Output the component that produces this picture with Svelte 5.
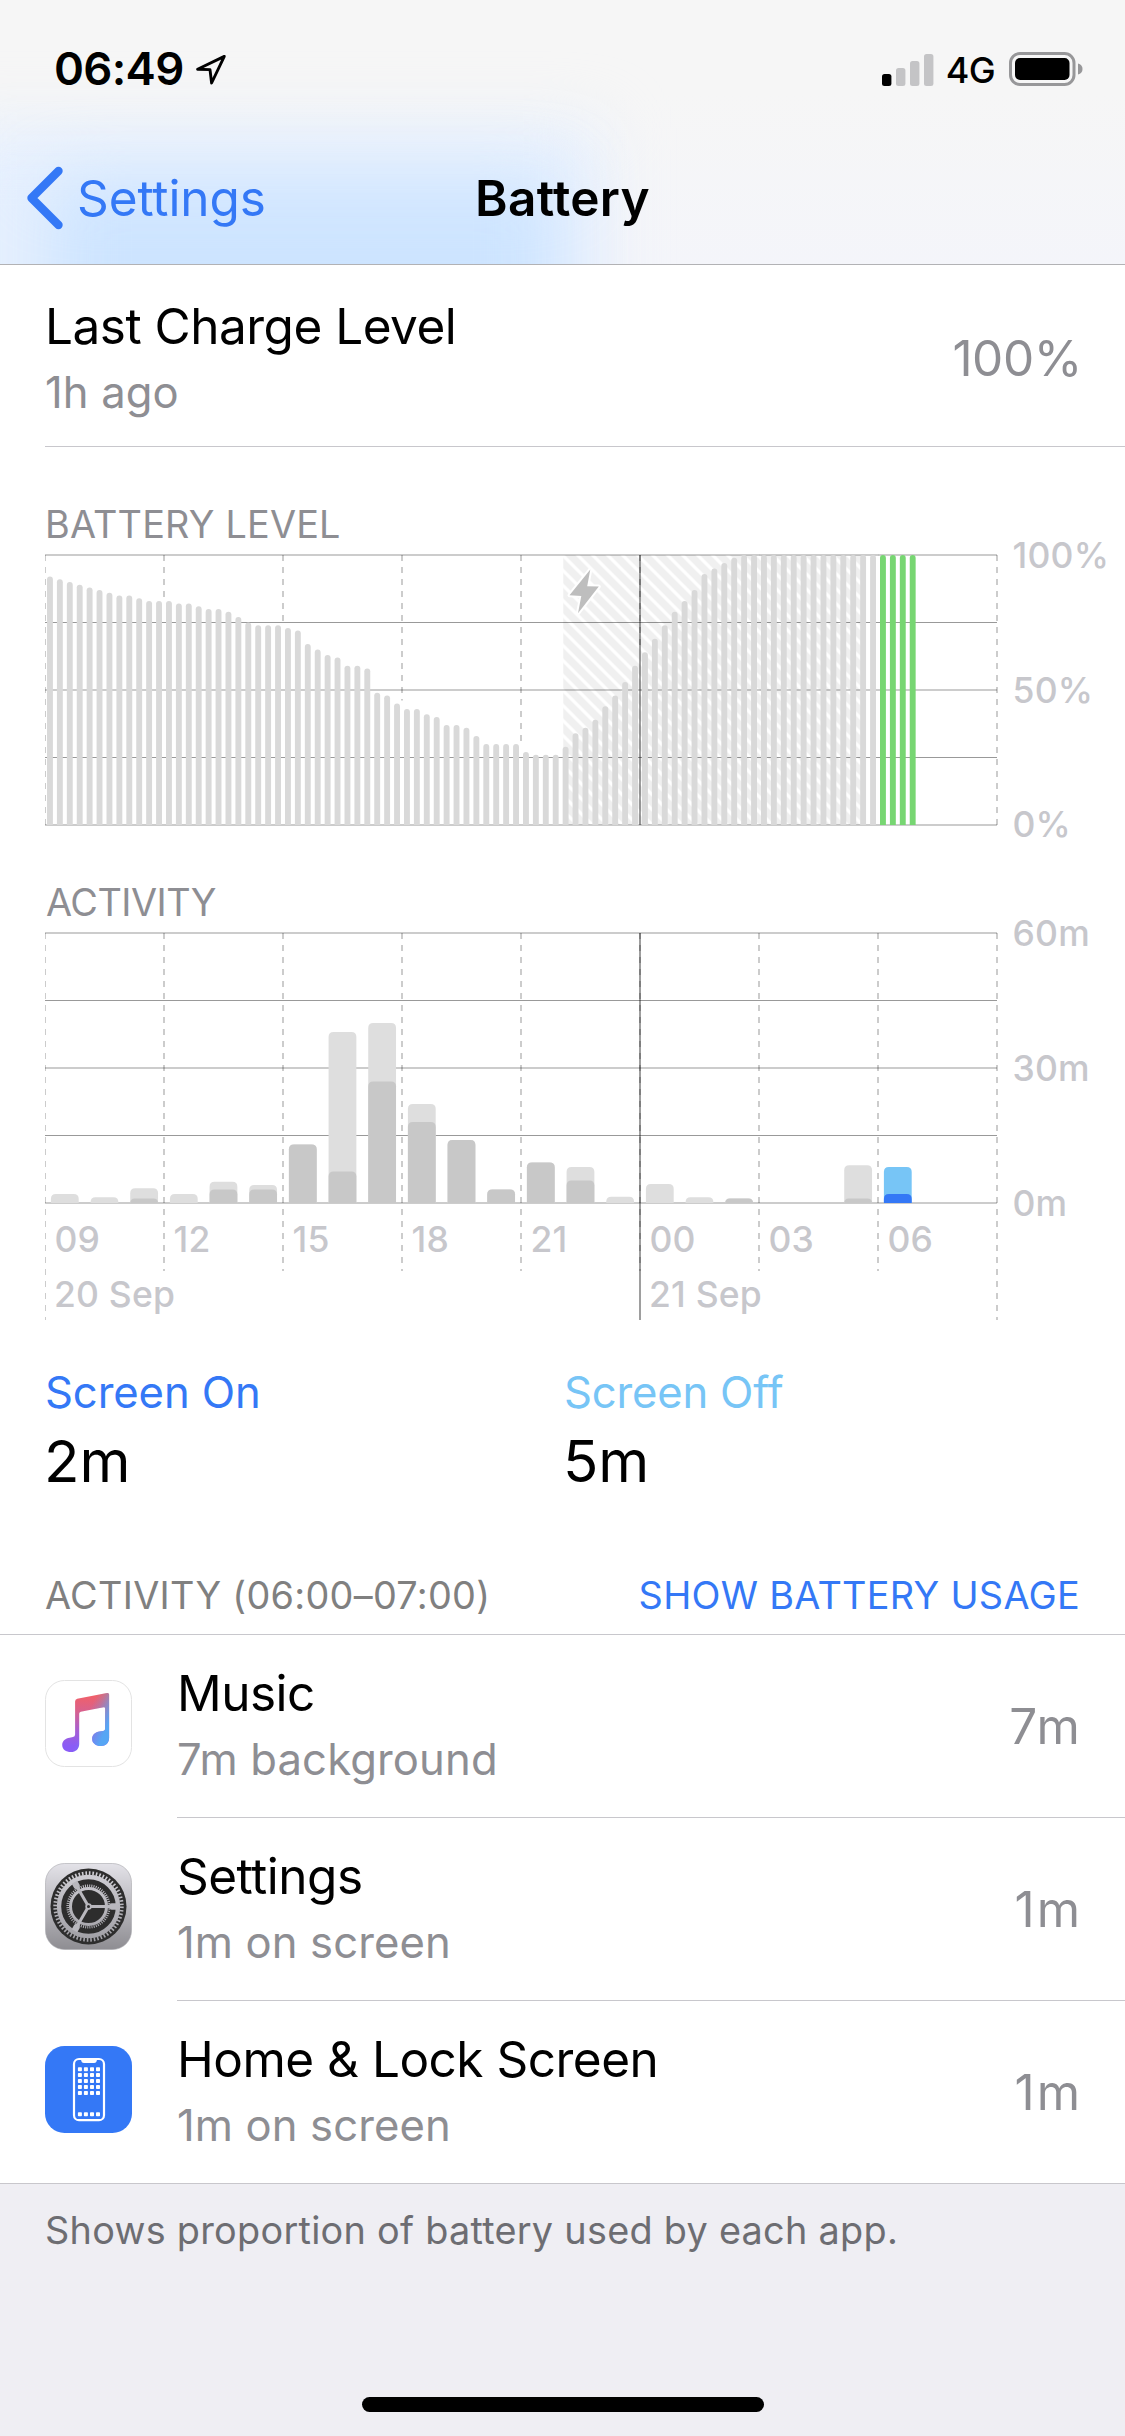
<script>
    const CHART_WIDTH = 952;
    const CHART_HEIGHT = 270;
    const slot = CHART_WIDTH / 96;
    const hour = CHART_WIDTH / 24;

    // one value per 15 minutes, in percent
    const levels = [
        92, 91, 90, 89, 88, 87, 86, 85, 85, 84, 83, 83,
        83, 82, 82, 81, 80, 80, 79, 77, 75, 74, 74, 74,
        73, 72, 67, 65, 63, 62, 59, 59, 58, 49, 48, 45,
        43, 43, 41, 40, 37, 37, 36, 33, 30, 30, 30, 30,
        27, 26, 26, 26, 29, 34, 36, 39, 44, 48, 53, 59,
        64, 69, 74, 79, 83, 87, 93, 95, 97, 99, 100, 100,
        100, 100, 100, 100, 100, 100, 100, 100, 100, 100, 100, 100,
        100, 100, 100, 100
    ];
    const selectedFrom = 84;

    // minutes per hour: total and the part with the screen on
    const usage = [
        { total: 2, on: 0 }, { total: 1.3, on: 0 }, { total: 3.3, on: 1 },
        { total: 2, on: 0 }, { total: 4.7, on: 3 }, { total: 4, on: 3 },
        { total: 13, on: 13 }, { total: 38, on: 7 }, { total: 40, on: 27 },
        { total: 22, on: 18 }, { total: 14, on: 14 }, { total: 3, on: 3 },
        { total: 9, on: 9 }, { total: 8, on: 5 }, { total: 1.4, on: 0 },
        { total: 4.2, on: 0 }, { total: 1.3, on: 0 }, { total: 1, on: 1 },
        { total: 0, on: 0 }, { total: 0, on: 0 }, { total: 8.4, on: 1 },
        { total: 8, on: 2, selected: true }
    ];

    const hours = ['09', '12', '15', '18', '21', '00', '03', '06'];
    const gridRows = [0, 1, 2, 3, 4].map(n => n * CHART_HEIGHT / 4);
    const gridColumns = [0, 1, 2, 3, 4, 5, 6, 7, 8].map(n => ({ n, x: n * hour * 3 }));

    const apps = [
        { icon: 'music', name: 'Music', detail: '7m background', time: '7m' },
        { icon: 'settings', name: 'Settings', detail: '1m on screen', time: '1m' },
        { icon: 'phone', name: 'Home & Lock Screen', detail: '1m on screen', time: '1m' }
    ];

    function columnEnd(n) {
        // dashes stop just above the bars they would run into
        if (n === 0 || n === 8) {
            return CHART_HEIGHT;
        }
        const highest = Math.max(levels[n * 12 - 1] || 0, levels[n * 12] || 0);
        return Math.max(0, CHART_HEIGHT * (1 - highest / 100) - 3);
    }

    function barPath(x, width, height, radius) {
        const top = CHART_HEIGHT - height;
        const r = Math.min(radius, height);
        return `M${x} ${CHART_HEIGHT}V${top + r}q0 ${-r} ${r} ${-r}h${width - 2 * r}q${r} 0 ${r} ${r}V${CHART_HEIGHT}z`;
    }
</script>

<div class="screen">
    <header>
        <div class="tint wide"></div>
        <div class="tint deep"></div>
        <div class="status">
            <span class="clock">06:49</span>
            <svg class="location" width="34" height="34" viewBox="0 0 34 34">
                <path d="M31.3 4.4L4.6 17.3L17 17.6L18.6 31z" fill="none" stroke="#000" stroke-width="2.9" stroke-linejoin="round" />
            </svg>
            <svg class="signal" width="52" height="33" viewBox="0 0 52 33">
                <rect x="0" y="21" width="9.4" height="12" rx="2.5" />
                <rect x="14" y="15" width="9.4" height="18" rx="2.5" fill="#c4c4c6" />
                <rect x="28" y="8" width="9.4" height="25" rx="2.5" fill="#c4c4c6" />
                <rect x="42" y="1" width="9.4" height="32" rx="2.5" fill="#c4c4c6" />
            </svg>
            <span class="network">4G</span>
            <svg width="74" height="34" viewBox="0 0 74 34">
                <rect x="1.5" y="1.5" width="63.5" height="31" rx="9.5" fill="none" stroke="#979799" stroke-width="3" />
                <rect x="6" y="6" width="54.5" height="22" rx="5" />
                <path d="M69 11.5q4.5 1.2 4.5 5.5t-4.5 5.5z" fill="#979799" />
            </svg>
        </div>
        <nav>
            <div class="back">
                <svg width="40" height="64" viewBox="0 0 40 64">
                    <path d="M33.5 5L6.5 32L33.5 59" fill="none" stroke="#3478f6" stroke-width="8.4" stroke-linecap="round" stroke-linejoin="round" />
                </svg>
                <span>Settings</span>
            </div>
            <h1>Battery</h1>
        </nav>
    </header>

    <div class="row charge">
        <div class="text">
            <div class="name">Last Charge Level</div>
            <div class="detail">1h ago</div>
        </div>
        <div class="value">100%</div>
    </div>

    <section class="chart-block level">
        <h2>BATTERY LEVEL</h2>
        <svg width="1080" height="316" viewBox="0 -24 1080 316">
            <defs>
                <pattern id="hatch" x="518" y="0.5" width="15" height="15" patternUnits="userSpaceOnUse">
                    <rect width="15" height="15" fill="#f0f0f0" />
                    <path d="M-3 -3L18 18M-3 12L3 18M12 -3L18 3" stroke="#fff" stroke-width="3.2" />
                </pattern>
            </defs>
            <rect x="518.3" y="0" width="300" height={CHART_HEIGHT} fill="url(#hatch)" />
            {#each gridRows as y}
                <line class="grid" x1="0" x2={CHART_WIDTH} y1={y} y2={y} />
            {/each}
            {#each gridColumns as { n, x }}
                <line class="grid dashed" x1={x} x2={x} y1="0" y2={columnEnd(n)} />
            {/each}
            {#each levels as level, i}
                <path d={barPath(i * slot + 2, 5.9, level * CHART_HEIGHT / 100, 2.9)} fill={i >= selectedFrom ? '#77d672' : '#d9d9d9'} />
            {/each}
            <line class="midnight" x1={hour * 15} x2={hour * 15} y1="0" y2={CHART_HEIGHT} />
            <path class="bolt" d="M545.3 14.5L524.5 40.3L536.3 40.9L533 58.3L553.8 31.6L542.2 31.2z" />
            <g class="axis">
                <text x="967.5" y="12.5">100%</text>
                <text x="967.5" y="147.5">50%</text>
                <text x="967.5" y="282">0%</text>
            </g>
        </svg>
    </section>

    <section class="chart-block usage">
        <h2>ACTIVITY</h2>
        <svg width="1080" height="426" viewBox="0 -24 1080 426">
            {#each gridRows as y}
                <line class="grid" x1="0" x2={CHART_WIDTH} y1={y} y2={y} />
            {/each}
            {#each gridColumns as { n, x }}
                <line class="grid dashed" x1={x} x2={x} y1="0" y2={n % 8 === 0 ? 387 : 338} />
            {/each}
            {#each usage as { total, on, selected }, i}
                {#if total}
                    <path d={barPath(i * hour + 5.9, 27.8, total * 4.5, 5)} fill={selected ? '#77c5f6' : '#dedede'} />
                {/if}
                {#if on}
                    <path d={barPath(i * hour + 5.9, 27.8, on * 4.5, 5)} fill={selected ? '#3478f6' : '#c8c8c8'} />
                {/if}
            {/each}
            <line class="midnight" x1={hour * 15} x2={hour * 15} y1="0" y2="387" />
            <g class="axis">
                <text x="967.5" y="12.5">60m</text>
                <text x="967.5" y="147.5">30m</text>
                <text x="967.5" y="282.5">0m</text>
                {#each hours as label, i}
                    <text x={i * hour * 3 + 9.5} y="319">{label}</text>
                {/each}
                <text x="9" y="374">20 Sep</text>
                <text x={hour * 15 + 9} y="374">21 Sep</text>
            </g>
        </svg>
    </section>

    <div class="totals">
        <div>
            <div class="label on">Screen On</div>
            <div class="total">2m</div>
        </div>
        <div>
            <div class="label off">Screen Off</div>
            <div class="total">5m</div>
        </div>
    </div>

    <div class="list-header">
        <span>ACTIVITY (06:00–07:00)</span>
        <span class="link">SHOW BATTERY USAGE</span>
    </div>

    <ul>
        {#each apps as app}
            <li>
                <svg width="87" height="87" viewBox="0 0 87 87">
                    {#if app.icon === 'music'}
                        <defs>
                            <linearGradient id="note" x1="0" y1="0" x2="0" y2="1">
                                <stop offset="0.05" stop-color="#f0606a" />
                                <stop offset="0.3" stop-color="#d9618c" />
                                <stop offset="0.65" stop-color="#a45fd6" />
                                <stop offset="0.9" stop-color="#8a5cf6" />
                            </linearGradient>
                            <linearGradient id="noteBlue" gradientUnits="userSpaceOnUse" x1="38" y1="30" x2="66" y2="42">
                                <stop offset="0.2" stop-color="#56a6f4" stop-opacity="0" />
                                <stop offset="0.45" stop-color="#56a6f4" stop-opacity="0.25" />
                                <stop offset="0.95" stop-color="#56a6f4" />
                            </linearGradient>
                        </defs>
                        <rect x="0.5" y="0.5" width="86" height="86" rx="19" fill="#fff" stroke="#e3e3e3" />
                        {#each ['note', 'noteBlue'] as paint}
                            <path fill="url(#{paint})" d="M64.1 14.5V58C64.1 63 60.5 66 56 66C51 66 47.1 63.3 47.1 59C47.1 54.5 50.5 52.3 54.5 51.6L58 51C59.5 50.7 60.1 50 60.1 48.5V28.5Q60.1 26.9 58.5 27.3L35.8 31.8Q34.2 32.1 34.2 33.8V64C34.2 69 30.6 72.1 26 72.1C21 72.1 17.2 69.4 17.2 65C17.2 60.6 20.6 58.4 24.6 57.7L28 57Q30.1 56.6 30.1 54.5V21.5Q30.1 19.2 32.2 18.8L62 13Q64.1 12.6 64.1 14.5z" />
                        {/each}
                    {:else if app.icon === 'settings'}
                        <defs>
                            <linearGradient id="metal" x1="0" y1="0" x2="0" y2="1">
                                <stop offset="0" stop-color="#e3e2e8" />
                                <stop offset="1" stop-color="#8e8d92" />
                            </linearGradient>
                            <linearGradient id="gear" gradientUnits="userSpaceOnUse" x1="0" y1="-38" x2="0" y2="38">
                                <stop offset="0" stop-color="#d2d1d7" />
                                <stop offset="1" stop-color="#9d9ca2" />
                            </linearGradient>
                        </defs>
                        <rect x="0.5" y="0.5" width="86" height="86" rx="19" fill="url(#metal)" stroke="#a9a9ad" stroke-opacity="0.6" />
                        <g transform="translate(43.5 43.5)" fill="none" stroke="url(#gear)">
                            <circle r="38" fill="#2d2d2d" stroke="none" />
                            <circle r="29.5" stroke-width="4.4" />
                            <circle r="33.3" stroke-width="3.8" stroke-dasharray="1.6 1.89" />
                            <circle r="18" stroke-width="3" />
                            <circle r="20.7" stroke-width="2.8" stroke-dasharray="1 1.17" />
                            {#each [0, 120, 240] as angle}
                                <path transform="rotate({angle})" d="M0 -1.5H20L23 -3.2H28V3.2H23L20 1.5H0z" fill="#b9b8be" stroke="none" />
                            {/each}
                            <circle r="3.2" fill="#b9b8be" stroke="none" />
                            <circle r="1.5" fill="#2d2d2d" stroke="none" />
                        </g>
                    {:else}
                        <rect width="87" height="87" rx="19.5" fill="#3478f6" />
                        <rect x="29" y="13" width="30" height="61.2" rx="5" fill="none" stroke="#fff" stroke-width="2.2" />
                        <path d="M36 12.5H52Q52 17 49 17H39Q36 17 36 12.5z" fill="#fff" />
                        {#each [23.3, 29.1, 35.1, 41, 47, 68.2] as y}
                            {#each [34.9, 40.9, 47, 53] as x}
                                <rect x={x - 2} y={y - 2} width="4" height="4" rx="0.8" fill="#fff" />
                            {/each}
                        {/each}
                    {/if}
                </svg>
                <div class="row">
                    <div class="text">
                        <div class="name">{app.name}</div>
                        <div class="detail">{app.detail}</div>
                    </div>
                    <div class="value">{app.time}</div>
                </div>
            </li>
        {/each}
    </ul>

    <footer>
        <p>Shows proportion of battery used by each app.</p>
        <div class="home-indicator"></div>
    </footer>
</div>

<style>
    :global(body){
        background: #fff;
    }

    .screen{
        display: flex;
        flex-direction: column;
        width: 1125px;
        height: 2436px;
        overflow: hidden;
        background: #fff;
        color: #000;
        font-family: Inter, "Liberation Sans", sans-serif;
        font-size: 49.5px;
        white-space: nowrap;
    }

    svg{
        display: block;
        flex: none;
    }

    header{
        position: relative;
        height: 264px;
        overflow: hidden;
        background: linear-gradient(180deg, #f6f6f6 35%, #f4f5fa);
        border-bottom: 1px solid #b2b2b5;
    }

    .tint{
        position: absolute;
    }

    .tint.wide{
        left: -60px;
        top: 128px;
        width: 660px;
        height: 260px;
        background: #e6f0fe;
        filter: blur(32px);
    }

    .tint.deep{
        left: 50px;
        top: 180px;
        width: 505px;
        height: 220px;
        background: #cde4ff;
        filter: blur(34px);
    }

    .status{
        position: relative;
        display: flex;
        align-items: center;
        box-sizing: border-box;
        height: 132px;
        padding: 6px 42px 0 54px;
    }

    .clock{
        font-size: 45.5px;
        font-weight: 600;
        letter-spacing: -0.7px;
        line-height: 56px;
        width: 139px;
    }

    .signal{
        margin-left: auto;
    }

    .network{
        font-size: 36px;
        font-weight: 500;
        letter-spacing: -0.6px;
        line-height: 42px;
        margin: 1px 14px 0 12px;
    }

    nav{
        position: relative;
        display: grid;
        grid-template-columns: 1fr auto 1fr;
        align-items: center;
        height: 132px;
    }

    .back{
        display: flex;
        align-items: center;
        gap: 12px;
        padding-left: 25px;
        color: #3478f6;
        letter-spacing: -0.1px;
    }

    h1{
        margin: 0;
        font-size: 49.5px;
        font-weight: 600;
        letter-spacing: 0.3px;
    }

    .row{
        display: flex;
        flex: 1;
        box-sizing: border-box;
        height: 183px;
        padding: 28px 43px 0 0;
        border-bottom: 1px solid #c8c7cc;
    }

    .charge{
        flex: none;
        height: 182px;
        margin-left: 45px;
        padding-top: 31px;
    }

    .text{
        flex: 1;
    }

    .name{
        line-height: 60px;
        letter-spacing: -0.5px;
    }

    .detail{
        margin-top: 9px;
        color: #8e8e93;
        font-size: 43.6px;
        letter-spacing: 0.12px;
        line-height: 56px;
    }

    .value{
        color: #8e8e93;
        letter-spacing: 2px;
        line-height: 60px;
        padding-top: 33px;
    }

    .charge .value{
        letter-spacing: -0.4px;
        padding-top: 32px;
    }

    .chart-block{
        padding-left: 45px;
    }

    .level{
        padding-top: 62px;
    }

    .usage{
        padding-top: 40px;
    }

    h2{
        margin: 0;
        color: #8e8e93;
        font-size: 37.8px;
        font-weight: 400;
        letter-spacing: 0.2px;
        line-height: 30px;
    }

    .usage h2{
        padding-left: 1px;
        letter-spacing: -0.5px;
    }

    /* room for the top axis label beside the heading */
    h2 + svg{
        margin-top: -8px;
    }

    .grid{
        stroke: rgba(0, 0, 0, 0.4);
        stroke-width: 1;
    }

    .dashed{
        stroke-dasharray: 6 6;
    }

    .midnight{
        stroke: rgba(0, 0, 0, 0.38);
        stroke-width: 2;
    }

    .bolt{
        fill: #bebebe;
        stroke: #fff;
        stroke-width: 4;
        stroke-linejoin: round;
        paint-order: stroke;
    }

    .axis{
        fill: #c7c7cc;
        font-size: 35.5px;
        font-weight: 500;
        letter-spacing: 0.2px;
    }

    .totals{
        display: grid;
        grid-template-columns: 519px 1fr;
        padding: 30px 0 0 45px;
    }

    .label{
        font-size: 43.6px;
        line-height: 56px;
    }

    .on{
        color: #3478f6;
        letter-spacing: -0.1px;
    }

    .off{
        color: #77c5f6;
        letter-spacing: -0.2px;
    }

    .total{
        margin: 5px 0 0 -1px;
        font-size: 58.2px;
        line-height: 70px;
    }

    .list-header{
        display: flex;
        justify-content: space-between;
        margin-top: 76px;
        padding: 0 45px 16px;
        border-bottom: 1px solid #c8c7cc;
        color: #808080;
        font-size: 37.8px;
        letter-spacing: 0.3px;
        line-height: 46px;
    }

    .link{
        color: #3478f6;
    }

    ul{
        margin: 0;
        padding: 0;
        list-style: none;
    }

    li{
        display: flex;
        padding-left: 45px;
        gap: 45px;
    }

    li svg{
        margin-top: 45px;
    }

    li:last-child{
        border-bottom: 1px solid #c8c7cc;
    }

    li:last-child .row{
        height: 182px;
        border-bottom: none;
    }

    footer{
        flex: 1;
        padding-top: 23px;
        background: #efeef3;
    }

    footer p{
        margin: 0 45px;
        color: #6d6d72;
        font-size: 37.8px;
        letter-spacing: 0.28px;
        line-height: 46px;
    }

    .home-indicator{
        width: 402px;
        height: 15px;
        margin: 144px auto 0;
        border-radius: 8px;
        background: #000;
    }
</style>
